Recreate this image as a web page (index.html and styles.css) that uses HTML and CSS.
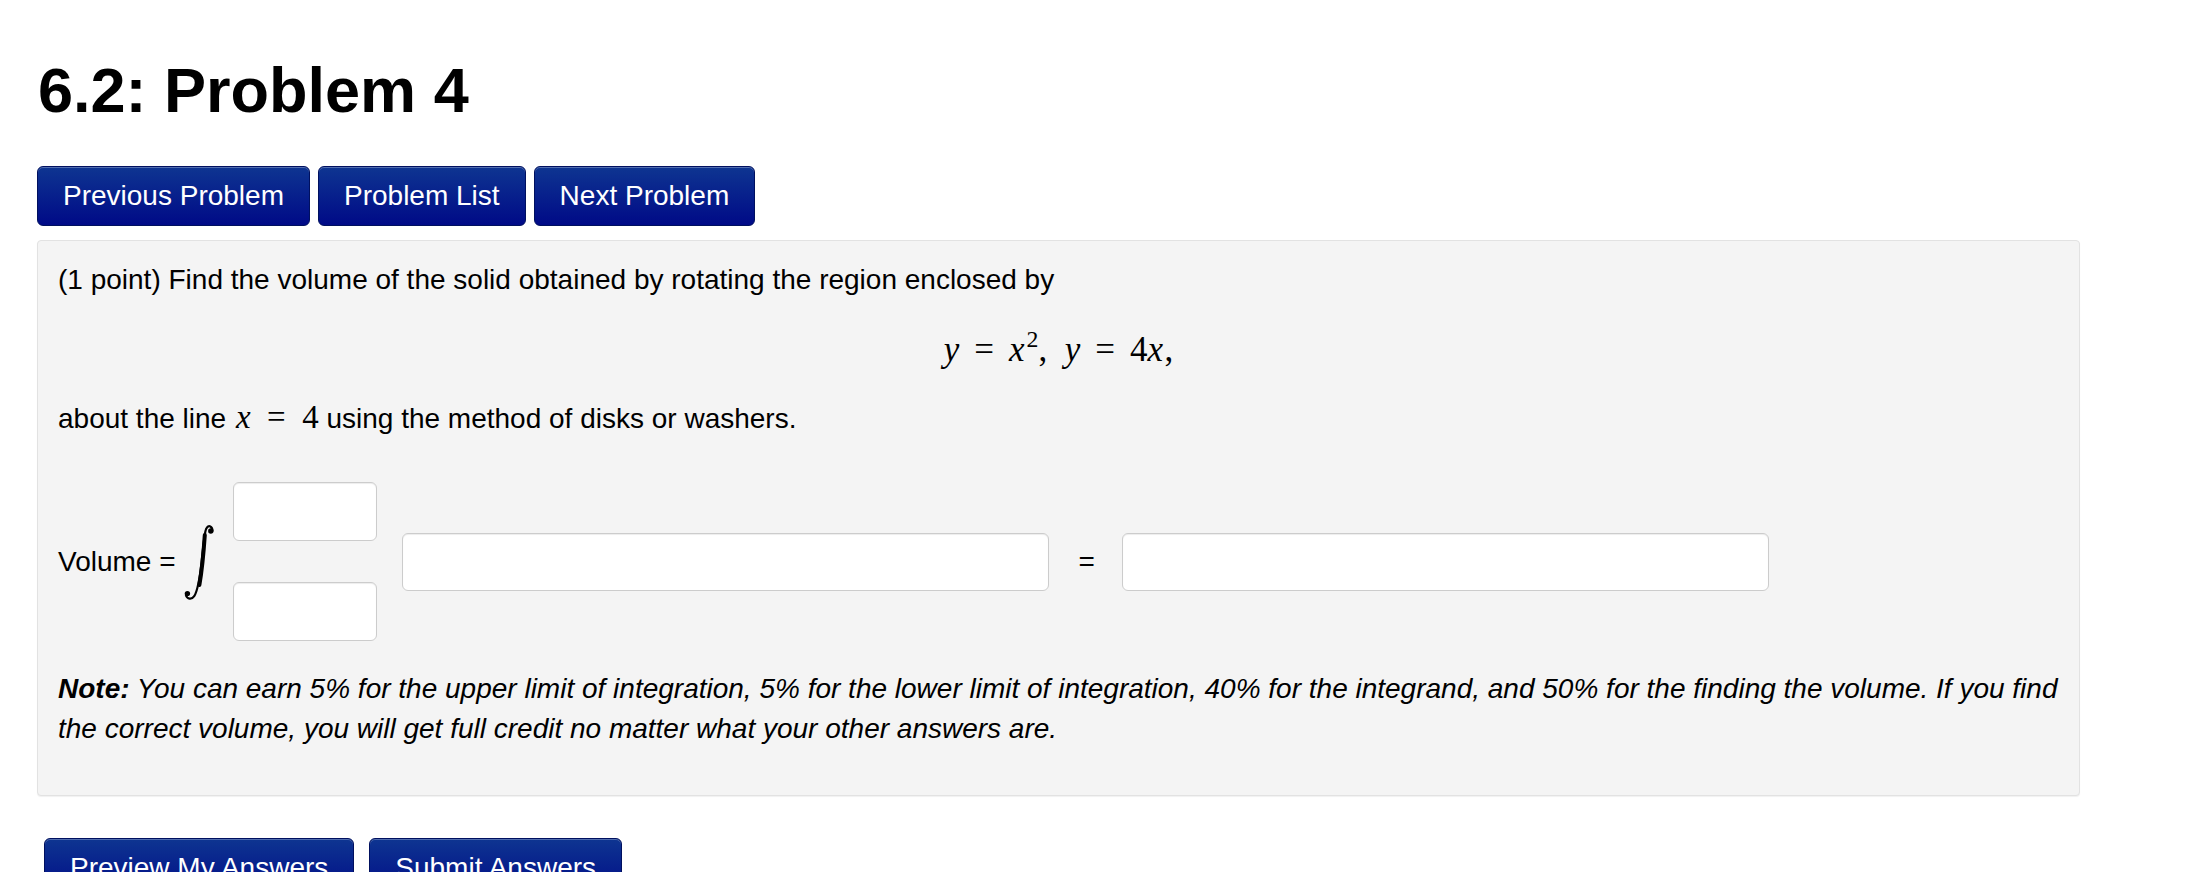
FILE: index.html
```html
<!DOCTYPE html>
<html lang="en">
<head>
<meta charset="utf-8">
<title>6.2: Problem 4</title>
<link rel="stylesheet" href="styles.css">
</head>
<body>
<main class="page">
  <h1 class="title">6.2: Problem 4</h1>

  <nav class="nav">
    <a class="btn" href="#">Previous Problem</a>
    <a class="btn" href="#">Problem List</a>
    <a class="btn" href="#">Next Problem</a>
  </nav>

  <section class="well">
    <p class="line">(1 point) Find the volume of the solid obtained by rotating the region enclosed by</p>
    <div class="display-math math">
      <span class="mi">y</span><span class="mo">=</span><span class="mi">x</span><sup class="msup">2</sup><span class="mp">,</span><span class="mi">y</span><span class="mo">=</span><span class="mn">4</span><span class="mi">x</span><span class="mc">,</span>
    </div>
    <p class="line">about the line <span class="math inline"><span class="mi">x</span><span class="mo">=</span><span class="mn">4</span></span> using the method of disks or washers.</p>

    <div class="answer-row">
      <span class="label">Volume =</span>
      <svg class="integral" width="32" height="78" viewBox="0 0 32 78" aria-hidden="true">
        <path d="M29.4 8.4 C29.8 3.4 25.6 1.0 23.2 5.8 C21.2 10 20.4 23 18.6 39 C17 53 15.4 67 11.2 73.2 C8.8 76.8 4.2 76.4 2.8 72" fill="none" stroke="#000" stroke-width="2.2"/>
        <path d="M21.8 12 C20.8 27 19.6 43 16.4 62" fill="none" stroke="#000" stroke-width="4" stroke-linecap="round"/>
        <circle cx="27.8" cy="8" r="2.7" fill="#000"/>
        <circle cx="4.4" cy="70.6" r="2.7" fill="#000"/>
      </svg>
      <div class="limits">
        <input class="field limit" type="text" aria-label="upper limit">
        <input class="field limit" type="text" aria-label="lower limit">
      </div>
      <input class="field wide integrand" type="text" aria-label="integrand">
      <span class="equals">=</span>
      <input class="field wide result" type="text" aria-label="volume">
    </div>

    <p class="note"><b>Note:</b> You can earn 5% for the upper limit of integration, 5% for the lower limit of integration, 40% for the integrand, and 50% for the finding the volume. If you find the correct volume, you will get full credit no matter what your other answers are.</p>
  </section>

  <div class="submit-row">
    <button class="btn" type="button">Preview My Answers</button>
    <button class="btn" type="button">Submit Answers</button>
  </div>
</main>
</body>
</html>
```

FILE: styles.css
```css
html {
  overflow: hidden;
}

body {
  margin: 0;
  background: #fff;
  color: #000;
  font-family: "Liberation Sans", Arial, sans-serif;
  font-size: 28px;
  line-height: 40px;
}

.page {
  padding: 0 108px 0 37px;
}

.title {
  margin: 55px 0 0 1px;
  font-size: 63px;
  line-height: 70px;
  font-weight: bold;
}

.nav {
  display: flex;
  gap: 8px;
  margin-top: 41px;
}

.btn {
  display: inline-block;
  box-sizing: border-box;
  height: 60px;
  padding: 9px 25px;
  border: 1px solid #00105f;
  border-radius: 6px;
  background: linear-gradient(to bottom, #0e3591 0%, #000a87 100%);
  box-shadow: inset 0 1px 0 rgba(255, 255, 255, 0.28);
  color: #fff;
  font-family: "Liberation Sans", Arial, sans-serif;
  font-size: 28px;
  line-height: 40px;
  text-decoration: none;
  white-space: nowrap;
  cursor: pointer;
}

.well {
  margin-top: 14px;
  padding: 19px 14px 20px 20px;
  background: #f4f4f4;
  border: 1px solid #e2e2e2;
  border-radius: 4px;
  box-shadow: 0 1px 1px rgba(0, 0, 0, 0.06);
}

.line {
  margin: 0;
}

.math {
  font-family: "Liberation Serif", "DejaVu Serif", serif;
  font-size: 35px;
}

.mi {
  font-style: italic;
}

.mo {
  margin: 0 0.43em;
}

.mp {
  margin-right: 0.5em;
}

.mc {
  margin-left: 0.04em;
}

.msup {
  font-size: 0.68em;
  vertical-align: 0.6em;
  line-height: 0;
  margin-left: 0.08em;
}

.display-math {
  margin: 30px 6px 29px 0;
  line-height: 40px;
  text-align: center;
}

.inline {
  font-size: 33px;
  line-height: 0;
}

.inline .mi {
  margin-left: 0.06em;
}

.inline .mo {
  margin: 0 0.5em;
}

.answer-row {
  display: flex;
  align-items: center;
  margin-top: 43px;
}

.label {
  white-space: nowrap;
}

.integral {
  display: block;
  margin-left: 7px;
}

.limits {
  display: flex;
  flex-direction: column;
  gap: 41px;
  margin-left: 18px;
}

.field {
  box-sizing: border-box;
  display: block;
  margin: 0;
  padding: 0 10px;
  background: #fff;
  border: 1px solid #cccccc;
  border-radius: 6px;
  box-shadow: inset 0 1px 1px rgba(0, 0, 0, 0.075);
  font: inherit;
}

.limit {
  width: 144px;
  height: 59px;
}

.wide {
  width: 647px;
  height: 58px;
}

.integrand {
  margin-left: 25px;
}

.equals {
  margin-left: 30px;
  margin-right: 27px;
}

.note {
  margin: 28px 0 26px;
  font-style: italic;
}

.note b {
  font-weight: bold;
}

.submit-row {
  display: flex;
  gap: 15px;
  margin: 42px 0 0 7px;
}
```
